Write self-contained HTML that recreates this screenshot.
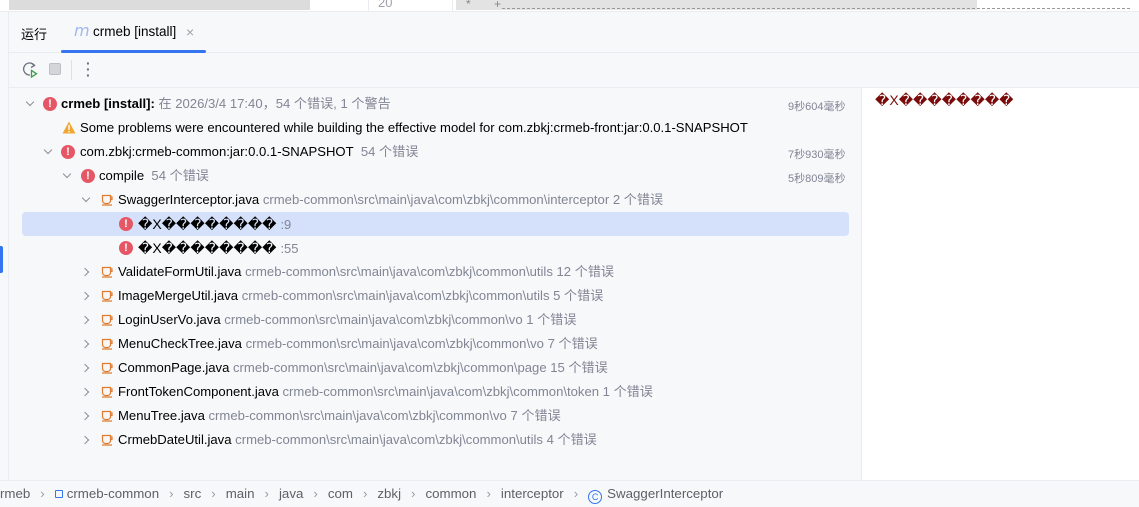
<!DOCTYPE html>
<html><head><meta charset="utf-8"><style>
*{margin:0;padding:0;box-sizing:border-box}
body{width:1139px;height:507px;overflow:hidden;background:#f7f8fa;font-family:"Liberation Sans","Noto Sans CJK SC",sans-serif;font-size:13px;color:#000;position:relative}
.abs{position:absolute}
.row{position:absolute;left:0;height:24px;line-height:24px;white-space:nowrap;font-size:13.1px;top:0}
.g{color:#818594}
.chev{position:absolute;width:6px;height:6px;border-right:1.3px solid #8c8f96;border-bottom:1.3px solid #8c8f96}
.err{position:absolute;width:14px;height:14px;border-radius:50%;background:#e55765;color:#fff;font-size:11px;font-weight:bold;text-align:center;line-height:14px}
.cup{position:absolute;width:13px;height:12px}
.sb{color:#5e6068;font-size:13.3px}
.sep{color:#9a9da3;margin:0 10px}
</style></head><body>
<div class="abs" style="left:0;top:0;width:1139px;height:12px;background:#fff;border-bottom:1px solid #ebecf0"></div>
<div class="abs" style="left:9px;top:0;width:301px;height:10px;background:#dcdcdc"></div>
<div class="abs" style="left:368px;top:0;width:1px;height:11px;background:#ebecf0"></div>
<div class="abs" style="left:378px;top:-5px;font-size:13px;color:#a0a3aa">20</div>
<div class="abs" style="left:452px;top:0;width:1px;height:11px;background:#ebecf0"></div>
<div class="abs" style="left:456px;top:0;width:521px;height:10px;background:#e3e3e3"></div>
<div class="abs" style="left:466px;top:-3px;font-size:12px;color:#888">*</div>
<div class="abs" style="left:494px;top:-3px;font-size:12px;color:#888">+</div>
<div class="abs" style="left:502px;top:8px;width:628px;border-top:1px dashed #999"></div>
<div class="abs" style="left:0;top:12px;width:9px;height:468px;background:#f7f8fa;border-right:1px solid #ebecf0"></div>
<div class="abs" style="left:0;top:246px;width:3px;height:27px;background:#3574f0;border-radius:0 2px 2px 0"></div>
<div class="abs" style="left:9px;top:12px;width:1130px;height:41px;border-bottom:1px solid #ebecf0"></div>
<div class="abs" style="left:21px;top:24px;font-size:13px">运行</div>
<div class="abs" style="left:74px;top:21px;font-size:16px;font-style:italic;color:#a3b6f0;font-family:'DejaVu Sans',sans-serif">m</div>
<div class="abs" style="left:93px;top:24px;font-size:13.5px">crmeb [install]</div>
<div class="abs" style="left:186px;top:24px;font-size:14px;color:#a0a3aa">×</div>
<div class="abs" style="left:61px;top:50px;width:145px;height:3px;background:#3574f0;border-radius:2px"></div>
<div class="abs" style="left:9px;top:53px;width:1130px;height:35px;border-bottom:1px solid #ebecf0"></div>
<svg class="abs" style="left:22px;top:61px" width="18" height="18" viewBox="0 0 18 18"><path d="M12.5 4.5A6 6 0 1 0 8 14" fill="none" stroke="#6c707e" stroke-width="1.3"/><path d="M9 2l3.5 2.5L9 6.5" fill="none" stroke="#6c707e" stroke-width="1.3"/><path d="M9.5 9.5v6.5l5-3.2z" fill="none" stroke="#3d9c4a" stroke-width="1.3"/></svg>
<div class="abs" style="left:49px;top:63px;width:12px;height:12px;background:#d4d5d9;border:1px solid #bdbfc4;border-radius:2px"></div>
<div class="abs" style="left:71px;top:60px;width:1px;height:20px;background:#dfe1e5"></div>
<div class="abs" style="left:86px;top:60px;font-size:14px;color:#6c707e;line-height:6px;font-weight:bold">·<br>·<br>·</div>
<div class="abs" style="left:861px;top:88px;width:278px;height:392px;background:#fff;border-left:1px solid #ebecf0"></div>
<div class="abs" style="left:875px;top:92px;font-size:14px;color:#7a0b0b">�X��������</div>
<div class="abs" style="left:22px;top:212px;width:827px;height:24px;background:#d5e1fb;border-radius:4px"></div>

<div class="chev" style="left:27px;top:99px;transform:rotate(45deg)"></div>
<div class="err" style="left:43px;top:97px">!</div>
<div class="row" style="left:61px;top:92px"><b>crmeb [install]:</b> <span class="g">在 2026/3/4 17:40，54 个错误, 1 个警告</span></div>
<div class="abs g" style="left:788px;top:98px;font-size:11px">9秒604毫秒</div>

<svg class="abs" style="left:62px;top:121px" width="14" height="13" viewBox="0 0 14 13"><path d="M7 0.5L13.5 12.5H0.5z" fill="#f0a732"/><rect x="6.3" y="4" width="1.4" height="5" fill="#fff"/><rect x="6.3" y="10" width="1.4" height="1.4" fill="#fff"/></svg>
<div class="row" style="left:80px;top:116px">Some problems were encountered while building the effective model for com.zbkj:crmeb-front:jar:0.0.1-SNAPSHOT</div>

<div class="chev" style="left:45px;top:147px;transform:rotate(45deg)"></div>
<div class="err" style="left:61px;top:145px">!</div>
<div class="row" style="left:80px;top:140px">com.zbkj:crmeb-common:jar:0.0.1-SNAPSHOT&nbsp; <span class="g">54 个错误</span></div>
<div class="abs g" style="left:788px;top:146px;font-size:11px">7秒930毫秒</div>

<div class="chev" style="left:64px;top:171px;transform:rotate(45deg)"></div>
<div class="err" style="left:81px;top:169px">!</div>
<div class="row" style="left:99px;top:164px">compile&nbsp; <span class="g">54 个错误</span></div>
<div class="abs g" style="left:788px;top:170px;font-size:11px">5秒809毫秒</div>

<div class="chev" style="left:83px;top:195px;transform:rotate(45deg)"></div>
<svg class="cup" style="left:101px;top:194px" viewBox="0 0 13 12"><path d="M1.5 1.5h8v5a3 3 0 0 1-3 3h-2a3 3 0 0 1-3-3z M9.5 3h1.5v2.5h-1.5 M1 11h10" fill="none" stroke="#e07a2e" stroke-width="1.2"/></svg>
<div class="row" style="left:118px;top:188px">SwaggerInterceptor.java <span class="g">crmeb-common\src\main\java\com\zbkj\common\interceptor 2 个错误</span></div>

<div class="err" style="left:119px;top:217px">!</div>
<div class="row" style="left:138px;top:212px;font-size:14px">�X�������� <span class="g" style="font-size:13px">:9</span></div>
<div class="err" style="left:119px;top:241px">!</div>
<div class="row" style="left:138px;top:236px;font-size:14px">�X�������� <span class="g" style="font-size:13px">:55</span></div>

<div id="files"></div>
<script>
var f=[["ValidateFormUtil.java","utils 12"],["ImageMergeUtil.java","utils 5"],["LoginUserVo.java","vo 1"],["MenuCheckTree.java","vo 7"],["CommonPage.java","page 15"],["FrontTokenComponent.java","token 1"],["MenuTree.java","vo 7"],["CrmebDateUtil.java","utils 4"]];
var h="";f.forEach(function(x,i){var y=260+i*24;var p=x[1].split(" ");
h+='<div class="chev" style="left:82px;top:'+(y+9)+'px;transform:rotate(-45deg)"></div>'+
'<svg class="cup" style="left:101px;top:'+(y+6)+'px" viewBox="0 0 13 12"><path d="M1.5 1.5h8v5a3 3 0 0 1-3 3h-2a3 3 0 0 1-3-3z M9.5 3h1.5v2.5h-1.5 M1 11h10" fill="none" stroke="#e07a2e" stroke-width="1.2"/></svg>'+
'<div class="row" style="left:118px;top:'+y+'px">'+x[0]+' <span class="g">crmeb-common\\src\\main\\java\\com\\zbkj\\common\\'+p[0]+' '+p[1]+' 个错误</span></div>';});
document.getElementById("files").innerHTML=h;
</script>
<div class="abs" style="left:0;top:480px;width:1139px;height:27px;background:#f7f8fa;border-top:1px solid #ebecf0"></div>
<div class="abs sb" style="left:0;top:486px;white-space:nowrap">rmeb<span class="sep">›</span><span style="display:inline-block;width:8px;height:8px;border:1px solid #3574f0;border-radius:1px;margin-right:4px"></span>crmeb-common<span class="sep">›</span>src<span class="sep">›</span>main<span class="sep">›</span>java<span class="sep">›</span>com<span class="sep">›</span>zbkj<span class="sep">›</span>common<span class="sep">›</span>interceptor<span class="sep">›</span><span style="display:inline-block;width:14px;height:14px;border:1.2px solid #3574f0;border-radius:50%;color:#3574f0;font-size:9px;text-align:center;line-height:12px;vertical-align:-2px;margin-right:5px">C</span>SwaggerInterceptor</div>
</body></html>
